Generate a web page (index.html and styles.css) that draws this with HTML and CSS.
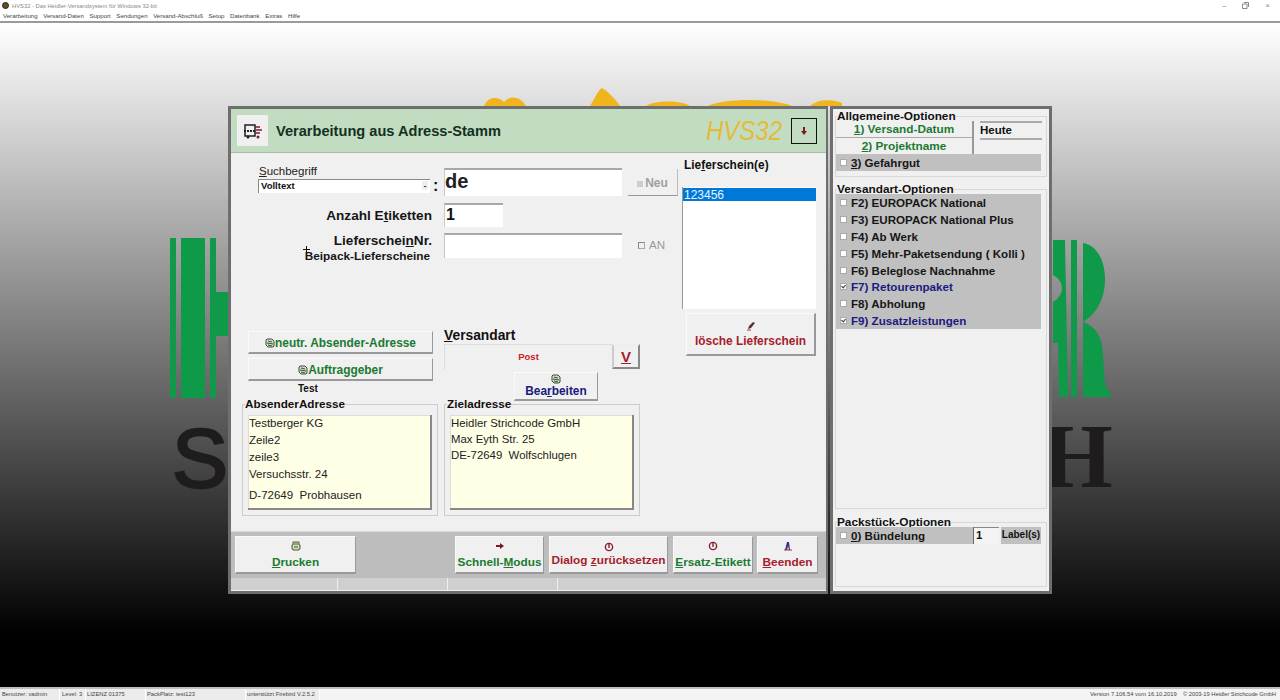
FILE: index.html
```html
<!DOCTYPE html>
<html lang="de">
<head>
<meta charset="utf-8">
<title>HVS32</title>
<link rel="stylesheet" href="styles.css">
</head>
<body>
<svg class="defs" width="0" height="0" aria-hidden="true">
  <symbol id="i-addr" viewBox="0 0 10 10"><path d="M2 1h5l2 2v5l-1 1H3L1 7V2z" fill="#d8e0c8" stroke="#35503a"/><path d="M3 3l4 1M2 5l6 1M3 7l4 1" stroke="#35503a"/></symbol>
  <symbol id="i-print" viewBox="0 0 10 10"><path d="M2 1h6v3h1v4H8v1H2V8H1V4h1z" fill="#cfe0b8" stroke="#4a5a3a"/><path d="M3 6h4M3 3h4" stroke="#4a5a3a"/></symbol>
  <symbol id="i-arrow" viewBox="0 0 10 10"><path d="M1 4h4V2l4 3-4 3V6H1z" fill="#7a1a24"/></symbol>
  <symbol id="i-reset" viewBox="0 0 10 10"><circle cx="5" cy="5" r="3.6" fill="none" stroke="#8c1c28" stroke-width="1.4"/><path d="M5 1v5" stroke="#8c1c28" stroke-width="1.4"/></symbol>
  <symbol id="i-exit" viewBox="0 0 10 10"><path d="M4 1h2l1 8H6L5 5 4 9H2z" fill="#3a3080"/><path d="M1 9h8" stroke="#a03040"/></symbol>
  <symbol id="i-pen" viewBox="0 0 10 10"><path d="M2 8l1-3 4-4 2 1-4 5z" fill="#5a3030"/><path d="M1 9h4" stroke="#a04040"/></symbol>
</svg>

<header class="chrome">
  <div class="titlebar">
    <span class="app-icon"></span>
    <span class="app-title">HVS32 - Das Heidler-Versandsystem für Windows 32-bit</span>
    <span class="win-controls">
      <span class="win-ctl">–</span>
      <svg class="win-restore" viewBox="0 0 7 7" width="7" height="7"><path d="M2 .5h4.500v4.500M.5 2h4.500v4.500h-4.500z" fill="none" stroke="#888"/></svg>
      <span class="win-ctl">×</span>
    </span>
  </div>
  <nav class="menubar">
    <span>Verarbeitung</span><span>Versand-Daten</span><span>Support</span><span>Sendungen</span><span>Versand-Abschluß</span><span>Setup</span><span>Datenbank</span><span>Extras</span><span>Hilfe</span>
  </nav>
</header>

<main class="desktop">
  <svg class="logo" viewBox="0 23 1280 664" width="1280" height="664" aria-hidden="true">
    <g fill="#f0b41e">
      <path d="M484 106c4-10 14-10 20-4 6-7 16-6 22 4z"/>
      <path d="M590 106c4-6 8-16 12-18 6 3 14 12 18 18z"/>
      <path d="M646 106c8-6 36-6 44 0z"/>
      <path d="M708 106c16-8 66-8 84 0z"/>
      <path d="M810 106c8-7 22-7 32-3v3z"/>
    </g>
    <g fill="#0f9a4a">
      <rect x="170" y="238" width="6" height="160"/>
      <rect x="181" y="238" width="24" height="160"/>
      <rect x="210" y="238" width="6" height="160"/>
      <rect x="216" y="292" width="14" height="44"/>
      <path d="M1053 240h12l3 157h-9l-1-54h-5v-41c5-3 9-8 9-14s-4-10-9-13z"/>
      <path d="M1071 240h6v157h-6z"/>
      <path d="M1083 243c14 2 22 18 22 36 0 22-10 36-22 43 12 4 20 14 20 34l2 28 7 13h-29z"/>
    </g>
    <text class="logo-s" x="172" y="487">S</text>
    <text class="logo-h" x="1042" y="487">H</text>
  </svg>

  <section class="window dialog">
    <div class="dlg-head">
      <div class="dlg-icon">
        <svg viewBox="0 0 20 18" width="20" height="18"><path d="M2 3h10v11H2z" fill="none" stroke="#222" stroke-width="1.500"/><path d="M12 5h5M13 8h6M12 11h5" stroke="#7a2030" stroke-width="1.500"/><path d="M1 9h12" stroke="#222" stroke-width="2" stroke-dasharray="2 1"/><circle cx="5" cy="15" r="1.500" fill="#222"/><circle cx="15" cy="15" r="1.500" fill="#7a2030"/></svg>
      </div>
      <h1 class="dlg-title">Verarbeitung aus Adress-Stamm</h1>
      <span class="hvs">HVS32</span>
      <button class="arrow-btn"><svg viewBox="0 0 6 10" width="6" height="10"><path d="M2 1h2v4h2L3 9 0 5h2z" fill="#7a1a1a"/></svg></button>
    </div>

    <div class="dlg-body">
      <div class="main">
        <div class="row row-search">
          <div class="label-col">
            <div class="lbl-search"><u>S</u>uchbegriff</div>
            <div class="select-line">
              <div class="select"><span>Volltext</span><b class="select-arrow">-</b></div>
              <span class="colon">:</span>
            </div>
          </div>
          <div class="input input-search">de</div>
          <button class="btn-neu"><i class="mini"></i>Neu</button>
        </div>

        <div class="row row-count">
          <div class="label-col label-right">Anzahl E<u>t</u>iketten</div>
          <div class="input input-count">1</div>
        </div>

        <div class="row row-ref">
          <div class="label-col label-right">
            <div>Lieferschei<u>n</u>Nr.</div>
            <div class="lbl-small"><i class="cursor"></i>Beipack-Lieferscheine</div>
          </div>
          <div class="input input-ref"></div>
          <label class="an"><i class="check check-dis"></i>AN</label>
        </div>

        <div class="lower">
          <div class="lower-left">
            <button class="btn btn-wide green"><svg class="ico"><use href="#i-addr"/></svg>neutr. Absender-Adresse</button>
            <button class="btn btn-wide green"><svg class="ico"><use href="#i-addr"/></svg>Auftraggeber</button>
            <div class="test">Test</div>
          </div>
          <div class="lower-right">
            <div class="lbl-versand"><u>V</u>ersandart</div>
            <div class="post-line">
              <div class="post">Post</div>
              <button class="btn-v"><u>V</u></button>
            </div>
            <button class="btn btn-edit navy"><svg class="ico"><use href="#i-addr"/></svg><span>Bea<u>r</u>beiten</span></button>
          </div>
        </div>

        <div class="addresses">
          <fieldset class="group">
            <legend>AbsenderAdresse</legend>
            <div class="addr">
              <div>Testberger KG</div>
              <div>Zeile2</div>
              <div>zeile3</div>
              <div>Versuchsstr. 24</div>
              <div class="addr-city">D-72649&nbsp; Probhausen</div>
            </div>
          </fieldset>
          <fieldset class="group">
            <legend>Zieladresse</legend>
            <div class="addr addr-tight">
              <div>Heidler Strichcode GmbH</div>
              <div>Max Eyth Str. 25</div>
              <div>DE-72649&nbsp; Wolfschlugen</div>
            </div>
          </fieldset>
        </div>
      </div>

      <aside class="side">
        <div class="lbl-list">Lie<u>f</u>erschein(e)</div>
        <div class="list"><div class="list-sel">123456</div></div>
        <button class="btn btn-del red"><svg class="ico"><use href="#i-pen"/></svg><span>lösche Lieferschein</span></button>
      </aside>
    </div>

    <div class="toolbar">
      <button class="btn tool tool-print green"><svg class="ico"><use href="#i-print"/></svg><span><u>D</u>rucken</span></button>
      <button class="btn tool tool-fast green"><svg class="ico"><use href="#i-arrow"/></svg><span>Schnell-<u>M</u>odus</span></button>
      <button class="btn tool tool-reset red"><svg class="ico"><use href="#i-reset"/></svg><span>Dialog <u>z</u>urücksetzen</span></button>
      <button class="btn tool tool-repl green"><svg class="ico"><use href="#i-reset"/></svg><span><u>E</u>rsatz-Etikett</span></button>
      <button class="btn tool tool-end red"><svg class="ico"><use href="#i-exit"/></svg><span><u>B</u>eenden</span></button>
    </div>
    <div class="dlg-status"><span></span><span></span><span></span><span></span></div>
  </section>

  <section class="window options">
    <fieldset class="opt-group opt-general">
      <legend>Allgemeine-Optionen</legend>
      <div class="pair">
        <div class="pair-btns">
          <button class="opt-btn green"><u>1</u>) Versand-Datum</button>
          <button class="opt-btn green"><u>2</u>) Projektname</button>
        </div>
        <div class="pair-vals">
          <div class="opt-val">Heute</div>
          <div class="opt-val"></div>
        </div>
      </div>
      <div class="opt-rows"><div class="opt"><i class="check"></i><span><u>3</u>) Gefahrgut</span></div></div>
    </fieldset>

    <fieldset class="opt-group opt-types">
      <legend>Versandart-Optionen</legend>
      <div class="opt-rows">
        <div class="opt"><i class="check"></i><span>F2) EUROPACK National</span></div>
        <div class="opt"><i class="check"></i><span>F3) EUROPACK National Plus</span></div>
        <div class="opt"><i class="check"></i><span>F4) Ab Werk</span></div>
        <div class="opt"><i class="check"></i><span>F5) Mehr-Paketsendung ( Kolli )</span></div>
        <div class="opt"><i class="check"></i><span>F6) Beleglose Nachnahme</span></div>
        <div class="opt navy"><i class="check on"></i><span>F7) Retourenpaket</span></div>
        <div class="opt"><i class="check"></i><span>F8) Abholung</span></div>
        <div class="opt navy"><i class="check on"></i><span>F9) Zusatzleistungen</span></div>
      </div>
    </fieldset>

    <fieldset class="opt-group opt-pack">
      <legend>Packstück-Optionen</legend>
      <div class="pack-row">
        <div class="opt pack-opt"><i class="check"></i><span><u>0</u>) Bündelung</span></div>
        <div class="pack-num">1</div>
        <div class="pack-unit">Label(s)</div>
      </div>
    </fieldset>
  </section>
</main>

<footer class="statusbar">
  <span class="st st-user">Benutzer: vadmin</span>
  <span class="st st-level">Level: 3</span>
  <span class="st st-lic">LIZENZ 01375</span>
  <span class="st st-place">PackPlatz: test123</span>
  <span class="st st-db">unterstützt Firebird V.2.5.2</span>
  <span class="st-fill"></span>
  <span class="st-right">Version 7.106.54 vom 16.10.2019</span>
  <span class="st-right st-copy">© 2003-19 Heidler Strichcode GmbH</span>
</footer>
</body>
</html>
```

FILE: styles.css
```css
* { box-sizing: border-box; }
html, body { margin: 0; padding: 0; }
body {
  width: 1280px;
  height: 700px;
  overflow: hidden;
  display: flex;
  flex-direction: column;
  background: #fff;
  font-family: "Liberation Sans", Arial, sans-serif;
  color: #111;
}
.defs { position: absolute; }
u { text-underline-offset: 1px; }
button { font-family: inherit; padding: 0; cursor: default; }

/* window chrome */
.chrome { height: 23px; flex: none; background: #fff; border-bottom: 2px solid #9a9a9a; }
.titlebar { height: 11px; display: flex; align-items: center; padding-left: 2px; font-size: 5.8px; color: #888; }
.app-icon { width: 7px; height: 7px; border-radius: 50%; background: #6a4a20; border: 1px solid #222; margin-right: 3px; }
.win-controls { margin-left: auto; display: flex; align-items: center; gap: 16px; padding-right: 10px; }
.win-ctl { font-size: 8px; line-height: 8px; color: #888; }
.win-restore { display: block; }
.menubar { height: 10px; display: flex; gap: 5.6px; padding-left: 3px; font-size: 6.1px; line-height: 10px; color: #444; }

/* desktop */
.desktop {
  flex: 1;
  position: relative;
  background: linear-gradient(#fff 0%, #000 92%);
}
.logo { position: absolute; left: 0; top: 0; }
.logo-s { font: 84px "Liberation Sans", sans-serif; fill: #1e1c1c; stroke: #1e1c1c; stroke-width: 2.5px; }
.logo-h { font: bold 91px "Liberation Serif", serif; fill: #1e1c1c; }

.window {
  position: absolute;
  top: 83px;
  height: 488px;
  background: #f0f0f0;
  border: 3px solid #6e6e6e;
}
.dialog { left: 228px; width: 600px; display: flex; flex-direction: column; border-right-width: 2px; }
.options { left: 830px; width: 222px; padding: 3px 2px 4px; display: flex; flex-direction: column; }

/* dialog header */
.dlg-head {
  height: 44px;
  flex: none;
  background: #c2dcc2;
  border-bottom: 1px solid #a8bca8;
  display: flex;
  align-items: center;
  padding: 0 9px 0 6px;
}
.dlg-icon { width: 31px; height: 31px; background: #f0f0f0; display: flex; align-items: center; justify-content: center; }
.dlg-title { margin: 0 0 0 8px; font-size: 14.6px; font-weight: bold; color: #12301e; }
.hvs {
  margin-left: auto;
  width: 76px;
  font-size: 24px;
  font-style: italic;
  line-height: 28px;
  color: #e4bb38;
  transform: scaleY(1.15);
  white-space: nowrap;
}
.arrow-btn {
  margin-left: 9px;
  width: 26px;
  height: 26px;
  background: #c2dcc2;
  border: 1px solid #111;
  display: flex;
  align-items: center;
  justify-content: center;
}

/* dialog body */
.dlg-body { height: 378px; flex: none; display: flex; }
.main { width: 451px; padding-top: 12px; }
.side { width: 140px; padding-top: 5px; }

.row { display: flex; align-items: flex-start; }
.label-col { width: 213px; flex: none; font-weight: bold; }
.label-right { text-align: right; padding-right: 12px; font-size: 13.6px; line-height: 16px; color: #161616; }
.lbl-search { padding-left: 28px; height: 14px; font: 11.5px/13px "Liberation Sans", sans-serif; color: #222; }
.select-line { display: flex; padding-left: 27px; align-items: center; }
.select {
  width: 172px;
  height: 14px;
  background: #fff;
  border-top: 1px solid #888;
  border-left: 1px solid #888;
  display: flex;
  justify-content: space-between;
  align-items: center;
  padding: 0 2px 2px;
  font-size: 9.5px;
}
.select-arrow { width: 6px; font-size: 8px; text-align: center; background: #eee; }
.colon { margin-left: 3px; font-size: 16px; line-height: 14px; }

.input { background: #fff; border-top: 2px solid #a8a8a8; border-left: 1px solid #c8c8c8; font-weight: bold; }
.row-search { height: 31px; }
.input-search { width: 178px; height: 28px; margin-top: 3px; padding-left: 0; font-size: 20px; line-height: 22px; color: #222; }
.btn-neu {
  width: 50px;
  height: 27px;
  margin: 4px 0 0 6px;
  padding-top: 2px;
  background: #f0f0f0;
  border: 0;
  border-bottom: 1px solid #999;
  border-right: 1px solid #bbb;
  color: #a0a0a0;
  font-size: 12px;
  font-weight: bold;
}
.mini { display: inline-block; width: 6px; height: 6px; background: #ccc; margin-right: 2px; }

.row-count { height: 24px; margin-top: 7px; }
.row-count .label-col { padding-top: 5px; }
.input-count { width: 59px; height: 24px; padding: 1px 0 0 1px; font-size: 16px; line-height: 18px; }
.row-ref { height: 30px; margin-top: 6px; }
.input-ref { width: 178px; height: 25px; }
.lbl-small { position: relative; padding-right: 2px; font-size: 11.8px; line-height: 14px; }
.cursor { position: absolute; left: 72px; top: -3px; width: 7px; height: 7px; background: linear-gradient(#111, #111) center / 100% 1px no-repeat, linear-gradient(#111, #111) center / 1px 100% no-repeat; }
.an { margin: 6px 0 0 16px; display: flex; align-items: center; color: #999; font-size: 11.500px; font-weight: normal; }

.lower { display: flex; margin-top: 65px; height: 73px; }
.lower-left { width: 185px; margin-left: 17px; padding-top: 3px; display: flex; flex-direction: column; gap: 4px; }
.lower-right { width: 196px; margin-left: 11px; }
.btn {
  background: #f0f0f0;
  border: 0;
  border-top: 1px solid #fafafa;
  border-left: 1px solid #fafafa;
  border-right: 1px solid #999;
  border-bottom: 2px solid #999;
  font-weight: bold;
  font-size: 11.9px;
}
.green { color: #1a7a30; }
.red { color: #a5202c; }
.navy { color: #1a1a80; }
.ico { width: 10px; height: 10px; flex: none; vertical-align: -1px; }
.btn-wide { height: 23px; padding: 1px 0 0; }
.test { padding-left: 50px; margin-top: -3px; font-size: 10px; font-weight: bold; line-height: 13px; }
.lbl-versand { font-size: 13.8px; font-weight: bold; line-height: 16px; height: 16px; }
.post-line { display: flex; }
.post { width: 168px; height: 26px; background: #f0f0f0; border-top: 1px solid #ddd; border-left: 1px solid #ddd; color: #c8202c; font-size: 9.5px; font-weight: bold; text-align: center; line-height: 23px; }
.btn-v { width: 28px; height: 25px; background: #f0f0f0; border: 2px solid #888; border-top-color: #eee; border-left-color: #ccc; color: #a5202c; font-size: 15px; font-weight: bold; }
.btn-edit { display: flex; flex-direction: column; align-items: center; justify-content: flex-end; width: 84px; height: 29px; margin: 2px 0 0 70px; padding-bottom: 1px; }

.addresses { display: flex; gap: 6px; margin: -2px 0 0 11px; }
.group { width: 196px; height: 117px; margin: 0; padding: 0 5px; border: 1px solid #ccc; min-width: 0; }
.group legend { padding: 0; margin-left: -3px; font-size: 11.7px; font-weight: bold; line-height: 10px; color: #111; }
.addr {
  height: 95px;
  margin-top: 6px;
  background: #ffffe6;
  box-shadow: inset 0 1px #ddd, inset 1px 0 #ddd;
  border-right: 2px solid #888;
  border-bottom: 2px solid #888;
  padding-left: 1px;
  font-size: 11.5px;
  line-height: 17px;
  color: #222;
}
.addr-city { margin-top: 4px; }
.addr-tight { line-height: 16px; font-size: 11.4px; }

/* side column */
.lbl-list { font-size: 11.9px; font-weight: bold; line-height: 14px; padding-left: 2px; }
.list { width: 134px; height: 122px; margin-top: 15px; background: #fff; border-left: 1px solid #999; padding-top: 1px; }
.list-sel { height: 13px; background: #0078d7; color: #e8f4ff; font-size: 12px; line-height: 15px; padding-left: 1px; }
.btn-del { display: flex; flex-direction: column; align-items: center; justify-content: center; gap: 3px; width: 130px; height: 43px; margin: 4px 0 0 4px; padding-bottom: 0; border-right-width: 2px; }

/* toolbar */
.toolbar { height: 47px; flex: none; background: #bdbdbd; border-top: 1px solid #d8d8d8; padding: 4px 0 0 4px; display: flex; }
.tool { display: flex; flex-direction: column; align-items: center; justify-content: center; gap: 4px; height: 38px; white-space: nowrap; font-size: 11.8px; }
.tool-print { width: 121px; }
.tool-fast { width: 89px; margin-left: 99px; }
.tool-reset { width: 119px; margin-left: 5px; gap: 1px; }
.tool-repl { width: 80px; margin-left: 5px; }
.tool-end { width: 61px; margin-left: 4px; }
.dlg-status { height: 13px; flex: none; background: #cfcfcf; border-bottom: 1px solid #eee; display: flex; }
.dlg-status span { width: 110px; border-right: 1px solid #eee; }
.dlg-status span:first-child { width: 107px; }
.dlg-status span:last-child { flex: 1; border: 0; }

/* options */
.opt-group { margin: 0; padding: 0; border: 1px solid #d8d8d8; min-width: 0; }
.opt-group legend { padding: 0; margin-left: 1px; font-size: 11.8px; font-weight: bold; line-height: 9px; color: #111; }
.opt-general { height: 65px; flex: none; }
.opt-types { height: 324px; flex: none; margin-top: 8px; }
.opt-pack { flex: 1; margin-top: 9px; }
.pair { display: flex; height: 33px; }
.pair-btns { width: 138px; display: flex; flex-direction: column; border-right: 2px solid #999; }
.opt-btn { height: 16.5px; background: #f0f0f0; border: 0; border-bottom: 1px solid #aaa; padding-top: 1px; font-size: 11.8px; font-weight: bold; line-height: 14px; color: #1a7a30; }
.opt-btn + .opt-btn { border-bottom-width: 0; padding-top: 0; }
.pair-vals { width: 62px; margin-left: 6px; }
.opt-val { height: 16.5px; border-top: 2px solid #aaa; font-size: 11.500px; font-weight: bold; line-height: 15px; }
.opt-rows { width: 205px; background: #c0c0c0; }
.opt { display: flex; align-items: center; height: 16.900px; padding-left: 4px; font-size: 11.6px; font-weight: bold; color: #161616; white-space: nowrap; }
.opt.navy { color: #1a1a80; }
.check { display: inline-block; position: relative; flex: none; width: 7px; height: 7px; margin-right: 4px; background: #fff; border: 1px solid #aaa; }
.check-dis { background: #f0f0f0; border-top-color: #888; border-left-color: #888; }
.check.on::after { content: ""; position: absolute; left: 1px; top: 0; width: 2px; height: 3px; border-right: 1px solid #333; border-bottom: 1px solid #333; transform: rotate(40deg); }
.pack-row { display: flex; }
.pack-opt { width: 137px; height: 17px; background: #c0c0c0; }
.pack-num { width: 26px; height: 17px; background: #f4f4f4; border-left: 1px solid #666; border-top: 1px solid #888; font-size: 11.500px; font-weight: bold; padding-left: 2px; line-height: 15px; }
.pack-unit { width: 40px; margin-left: 2px; height: 17px; background: #c0c0c0; font-size: 10px; font-weight: bold; line-height: 16px; text-align: center; }

/* status bar */
.statusbar { height: 13px; flex: none; background: #f4f4f4; border-top: 2px solid #c0c0c0; display: flex; font-size: 5.8px; line-height: 11px; color: #444; white-space: nowrap; }
.st { background: #ececec; border-right: 1px solid #fff; padding-left: 2px; }
.st-user { width: 60px; }
.st-level { width: 26px; }
.st-lic { width: 60px; padding-left: 1px; }
.st-place { width: 100px; padding-left: 1px; }
.st-db { width: 74px; padding-left: 1px; }
.st-fill { flex: 1; }
.st-right { width: 93px; }
.st-copy { width: 97px; letter-spacing: -.05px; }
```
